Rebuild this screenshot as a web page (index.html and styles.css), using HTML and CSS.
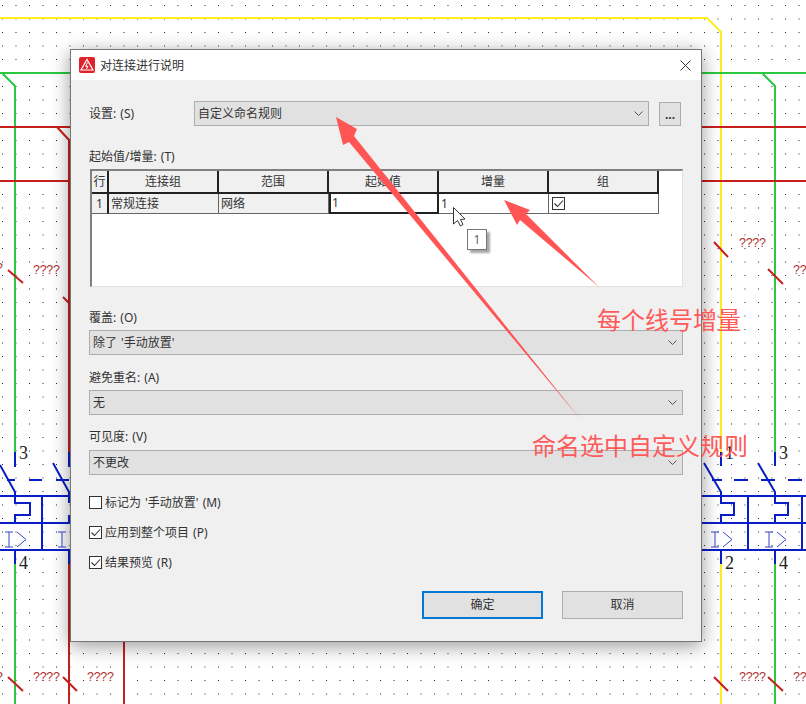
FILE: index.html
```html
<!DOCTYPE html>
<html lang="zh-CN">
<head>
<meta charset="utf-8">
<title>对连接进行说明</title>
<link rel="stylesheet" href="styles.css">
</head>
<body>
<svg class="canvas" width="806" height="704" viewBox="0 0 806 704">
  <defs>
    <pattern id="dots" x="2" y="5" width="13.5" height="13.5" patternUnits="userSpaceOnUse">
      <rect width="1" height="1" fill="#222"/>
    </pattern>
  </defs>
  <rect width="806" height="704" fill="#fff"/>
  <rect width="806" height="704" fill="url(#dots)"/>
  <g class="w yellow"><path d="M0 18H707L721 32V452M721 564V704"/></g>
  <g class="w green"><path d="M0 73H806M2 73L15 86V452M15 564V704M762 73L775 86V452M775 564V704"/></g>
  <g class="w red"><path d="M0 127H806M0 181H806M57 127L69 140V452M69 564V704M124 600V704"/></g>
  <g class="tick">
    <path d="M8 270L23 283M63 297L77 311M714 242L728 257M768 269L783 284M8 677L23 691M63 677L77 691M714 677L728 691M768 677L783 691"/>
  </g>
  <g class="q">
    <text x="33" y="274">????</text>
    <text x="739" y="247">????</text>
    <text x="793" y="274">??</text>
    <text x="33" y="681">????</text>
    <text x="87" y="681">????</text>
    <text x="739" y="681">????</text>
    <text x="793" y="681">??</text>
    <text x="-4" y="681">?</text>
    <text x="-4" y="272">?</text>
  </g>
  <g class="b">
    <path d="M15 452V467M69 452V467M721 452V466M775 452V466M15 550V564M69 550V564M721 550V564M775 550V564"/>
    <path d="M0 465L15 492V503H30V515H15V523M53 463L69 492V503M69 515V523M704 463L721 492V503H734V515H721V523M758 463L775 492V503H788V515H775V523"/>
    <path d="M0 496H70M0 523H70M0 550H70M702 496H806M702 523H806M702 550H806M42 496V550M748 496V550M802 496V550"/>
    <path d="M7 480H15M29 480H42M56 480H69M712 480H722M734 480H748M761 480H775M788 480H802"/>
  </g>
  <g class="ib">
    <path d="M5 532H13M9 532V547M5 547H13M17 532L26 539.5L17 547M58 532H66M62 532V547M58 547H66M711 532H719M715 532V547M711 547H719M723 532L732 539.5L723 547M765 532H773M769 532V547M765 547H773M777 532L786 539.5L777 547"/>
  </g>
  <g class="num">
    <text x="19" y="459">3</text>
    <text x="19" y="569">4</text>
    <text x="725" y="459">1</text>
    <text x="725" y="569">2</text>
    <text x="779" y="459">3</text>
    <text x="779" y="569">4</text>
  </g>
</svg>

<section class="dialog">
  <header class="titlebar">
    <svg class="appicon" width="16" height="16" viewBox="0 0 16 16">
      <rect width="16" height="16" rx="2" fill="#e0222a"/>
      <path d="M8 2.5L14 13H2Z" fill="none" stroke="#fff" stroke-width="1.2"/>
      <path d="M8.6 5.5L6.6 9.3H9L7.4 12" fill="none" stroke="#fff" stroke-width="1"/>
    </svg>
    <span class="title">对连接进行说明</span>
    <svg class="close" width="11" height="11" viewBox="0 0 11 11">
      <path d="M0.5 0.5L10.5 10.5M10.5 0.5L0.5 10.5" stroke="#333" stroke-width="1" fill="none"/>
    </svg>
  </header>
  <div class="body">
    <div class="setting">
      <label class="setting-label">设置: (S)</label>
      <div class="select grow">
        <span>自定义命名规则</span>
        <svg class="chev" width="9" height="5" viewBox="0 0 9 5"><path d="M0.5 0.5L4.5 4.5L8.5 0.5" fill="none" stroke="#555" stroke-width="1"/></svg>
      </div>
      <div class="more">...</div>
    </div>

    <label class="lbl lbl-start">起始值/增量: (T)</label>
    <div class="grid">
      <div class="hd">行</div>
      <div class="hd">连接组</div>
      <div class="hd">范围</div>
      <div class="hd">起始值</div>
      <div class="hd">增量</div>
      <div class="hd">组</div>
      <div class="rowhead">1</div>
      <div class="cell ro">常规连接</div>
      <div class="cell ro">网络</div>
      <div class="cell sel">1</div>
      <div class="cell">1</div>
      <div class="cell cell-check">
        <span class="cb"><svg width="11" height="11" viewBox="0 0 11 11"><path d="M1.5 5.5L4.5 8.5L10 2.5" fill="none" stroke="#333" stroke-width="1.1"/></svg></span>
      </div>
    </div>

    <label class="lbl lbl-over">覆盖: (O)</label>
    <div class="select">
      <span>除了 '手动放置'</span>
      <svg class="chev" width="9" height="5" viewBox="0 0 9 5"><path d="M0.5 0.5L4.5 4.5L8.5 0.5" fill="none" stroke="#555" stroke-width="1"/></svg>
    </div>

    <label class="lbl lbl-dup">避免重名: (A)</label>
    <div class="select">
      <span>无</span>
      <svg class="chev" width="9" height="5" viewBox="0 0 9 5"><path d="M0.5 0.5L4.5 4.5L8.5 0.5" fill="none" stroke="#555" stroke-width="1"/></svg>
    </div>

    <label class="lbl lbl-vis">可见度: (V)</label>
    <div class="select">
      <span>不更改</span>
      <svg class="chev" width="9" height="5" viewBox="0 0 9 5"><path d="M0.5 0.5L4.5 4.5L8.5 0.5" fill="none" stroke="#555" stroke-width="1"/></svg>
    </div>

    <div class="checks">
      <div class="chk"><span class="cb"></span><span>标记为 '手动放置' (M)</span></div>
      <div class="chk"><span class="cb"><svg width="11" height="11" viewBox="0 0 11 11"><path d="M1.5 5.5L4.5 8.5L10 2.5" fill="none" stroke="#333" stroke-width="1.1"/></svg></span><span>应用到整个项目 (P)</span></div>
      <div class="chk"><span class="cb"><svg width="11" height="11" viewBox="0 0 11 11"><path d="M1.5 5.5L4.5 8.5L10 2.5" fill="none" stroke="#333" stroke-width="1.1"/></svg></span><span>结果预览 (R)</span></div>
    </div>

    <div class="actions">
      <div class="btn primary">确定</div>
      <div class="btn">取消</div>
    </div>
  </div>
</section>

<div class="tip">1</div>

<svg class="overlay" width="806" height="704" viewBox="0 0 806 704">
  <path class="cursor" d="M453.5 207.5V224L457.5 220.5L460.5 226L463 224.5L460.5 219.5L465 219Z"/>
  <path class="arrow" d="M336 117L357 129L354 136L581 420L349 142L343 145Z"/>
  <path class="arrow" d="M504 200L530 210L526 214L599 287L520 220L517 225Z"/>
  <text class="note" x="597" y="329">每个线号增量</text>
  <text class="note" x="532" y="455">命名选中自定义规则</text>
</svg>
</body>
</html>
```
FILE: styles.css
```css
* { box-sizing: border-box; }
html, body { margin: 0; padding: 0; }
body {
  position: relative;
  width: 806px;
  height: 704px;
  overflow: hidden;
  background: #fff;
  font-family: "Noto Sans", "Noto Sans CJK SC", sans-serif;
  font-size: 12px;
  word-spacing: 1px;
  color: #333;
}
.canvas, .overlay { position: absolute; left: 0; top: 0; display: block; }
.overlay { pointer-events: none; }

.w path { fill: none; stroke-width: 2; }
.yellow path { stroke: #fdee21; }
.green path { stroke: #2cc840; }
.red path { stroke: #c5201c; }
.tick path { fill: none; stroke: #c8201c; stroke-width: 2; }
.q text { font: 12.5px "Liberation Sans", sans-serif; fill: #b03030; letter-spacing: -0.3px; }
.b path { fill: none; stroke: #0a1ec8; stroke-width: 2; }
.ib path { fill: none; stroke: #3a44c8; stroke-width: 1; }
.num text { font: 18px "Liberation Serif", serif; fill: #222; }

.dialog {
  position: absolute;
  left: 70px;
  top: 49px;
  width: 632px;
  height: 593px;
  border: 1px solid #777;
  background: #f0f0f0;
  box-shadow: 0 4px 18px rgba(0, 0, 0, 0.4);
  display: flex;
  flex-direction: column;
}
.titlebar {
  height: 30px;
  background: #fff;
  display: flex;
  align-items: center;
  padding: 0 10px 0 8px;
}
.appicon { flex: none; margin-right: 5px; }
.title { flex: 1; color: #333; }
.close { flex: none; }

.body { flex: 1; padding: 21px 18px 0; display: flex; flex-direction: column; }
.setting { display: flex; height: 25px; align-items: center; padding-right: 2px; }
.setting-label { width: 105px; flex: none; padding-bottom: 1px; }
.grow { flex: 1; }
.more {
  flex: none;
  width: 22px;
  height: 24px;
  margin-left: 10px;
  background: #e1e1e1;
  border: 1px solid #adadad;
  text-align: center;
  line-height: 24px;
  font-weight: 700;
}
.select {
  height: 25px;
  background: #e1e1e1;
  border: 1px solid #adadad;
  display: flex;
  align-items: center;
  justify-content: space-between;
  padding: 0 3px 1px 3px;
}
.select .chev { margin-right: 2px; margin-top: 1px; }
.lbl { display: block; height: 16px; line-height: 16px; }
.lbl-start { margin-top: 23px; margin-bottom: 4px; }
.lbl-over { margin-top: 23px; margin-bottom: 4px; }
.lbl-dup { margin-top: 15px; margin-bottom: 4px; }
.lbl-vis { margin-top: 14px; margin-bottom: 5px; }

.grid {
  margin-left: 1px;
  height: 118px;
  background: #fff;
  border-top: 2px solid #808080;
  border-left: 2px solid #808080;
  border-right: 1px solid #e0e0e0;
  border-bottom: 1px solid #e0e0e0;
  display: grid;
  grid-template-columns: 17px repeat(5, 110px);
  grid-template-rows: 23px 20px;
  align-content: start;
  justify-content: start;
}
.hd {
  background: #f0f0f0;
  border-right: 2px solid #222;
  border-bottom: 2px solid #222;
  text-align: center;
  line-height: 22px;
}
.rowhead {
  background: #f0f0f0;
  border-right: 2px solid #222;
  border-bottom: 1px solid #666;
  text-align: center;
  line-height: 19px;
}
.cell {
  background: #fff;
  border-right: 1px solid #666;
  border-bottom: 1px solid #666;
  padding-left: 2px;
  line-height: 18px;
  display: flex;
  align-items: center;
}
.cell-check { padding-left: 3px; }
.cell.ro { background: #f0f0f0; }
.cell.sel { border: 2px solid #222; border-top: 0; padding-left: 1px; }

.cb {
  flex: none;
  width: 13px;
  height: 13px;
  border: 1px solid #333;
  background: #fff;
  display: flex;
  align-items: center;
  justify-content: center;
}
.cb svg { display: block; }

.checks { margin-top: 19px; display: flex; flex-direction: column; gap: 14px; }
.chk { height: 16px; display: flex; align-items: center; gap: 3px; }

.actions { margin-top: 21px; display: flex; justify-content: flex-end; gap: 19px; }
.btn {
  width: 121px;
  height: 28px;
  background: #e1e1e1;
  border: 1px solid #adadad;
  text-align: center;
  line-height: 26px;
}
.btn.primary { border: 2px solid #0078d7; line-height: 24px; }

.tip {
  position: absolute;
  left: 467px;
  top: 229px;
  width: 20px;
  height: 21px;
  background: #fff;
  border: 1px solid #777;
  box-shadow: 3px 3px 2px rgba(0, 0, 0, 0.35);
  text-align: center;
  line-height: 19px;
  color: #666;
}
.cursor { fill: #fff; stroke: #333; stroke-width: 1; }
.arrow { fill: #ff5555; }
.note {
  font: 400 24px "Noto Sans CJK SC", sans-serif;
  fill: #ff5a5a;
  word-spacing: 0;
}
```
